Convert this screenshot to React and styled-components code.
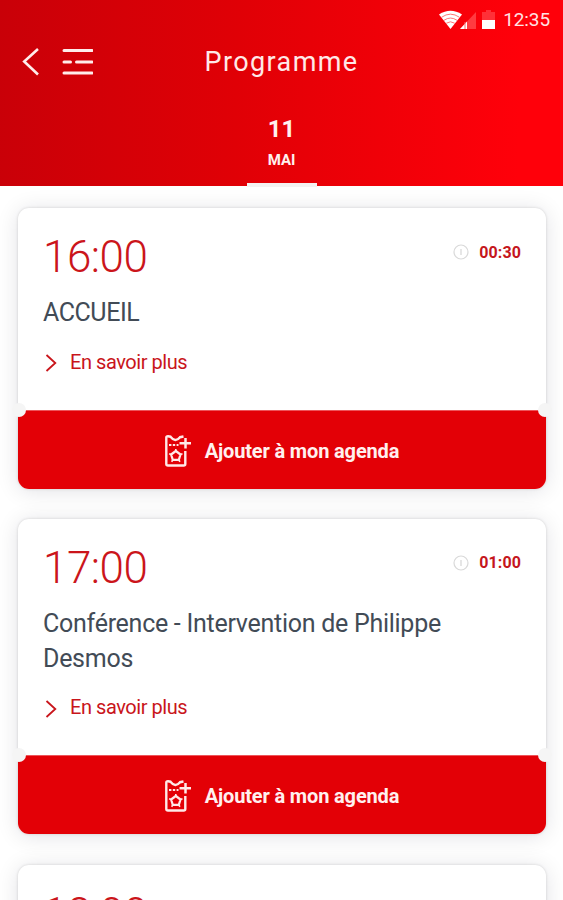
import React from 'react';
import styled, { createGlobalStyle } from 'styled-components';

const sessions = [
  { time: '16:00', duration: '00:30', title: 'ACCUEIL', spacing: '-0.45px' },
  { time: '17:00', duration: '01:00', title: 'Conférence - Intervention de Philippe Desmos' },
  { time: '18:00' },
];

const StatusIcons = () => (
  <svg width="58" height="22" viewBox="0 0 58 22" fill="none">
    <path d="M0 4.5Q11.5-3 23 4.5L11.5 19Z" fill="#fff" />
    <path d="M2.5 7.3Q11.5 1 20.5 7.3M5 10.3Q11.5 5.8 18 10.3M7.3 13.2Q11.5 10.4 15.7 13.2" stroke="#f66" strokeWidth="0.9" />
    <path d="M37 2V19H21Z" fill="#ff3b40" />
    <path d="M28 11.5V19H21Z" fill="#fff" />
    <path d="M26 12V19" stroke="#fa6568" />
    <path d="M47 0H52V2H56V10H43V2H47Z" fill="#ff3038" />
    <path d="M43 10H56V19H43Z" fill="#fff" />
  </svg>
);

const BackIcon = () => (
  <svg width="18" height="30" viewBox="0 0 18 30" fill="none">
    <path d="M17 2L3.2 14.5L17 27.5" stroke="#ffeceb" strokeWidth="2.6" />
  </svg>
);

const MenuIcon = () => (
  <svg width="32" height="30" viewBox="0 0 32 30" fill="none">
    <path d="M3 3.5H31M3 15H9.5M15.5 15H31M3 26H31" stroke="#ffeceb" strokeWidth="3" strokeLinecap="round" />
  </svg>
);

const TicketIcon = () => (
  <svg width="28" height="34" viewBox="0 0 28 34" fill="none" stroke="#ffe9e8">
    <path d="M20.3 17V30Q20.3 31.5 18.8 31.5H3Q1.3 31.5 1.3 30V3.5Q1.3 2.2 3 2.2L5.5 2.7Q10.3 9 15 3.2L18.5 2.5" strokeWidth="2.4" />
    <path d="M4 11H13.5" strokeWidth="1.9" strokeDasharray="2.4 1.4" />
    <path d="M20.5 4V14.5M14.5 9.3H26" strokeWidth="2.5" />
    <path d="M10.8 17L15.5 20.5L13.8 25.9H7.8L6.1 20.5Z" strokeWidth="2.2" strokeLinejoin="round" />
    <path d="M10.8 15V17M17.5 19.8L15.5 20.5M15 27.8L13.8 26M6.6 27.8L7.8 26M4.1 19.8L6 20.5" strokeWidth="1.6" />
  </svg>
);

const App = () => {
  return (
    <>
      <GlobalStyle />
      <Screen>
        <Header>
          <StatusBar>
            <StatusIcons />
            <Clock>12:35</Clock>
          </StatusBar>
          <NavBar>
            <NavIcons>
              <BackIcon />
              <MenuIcon />
            </NavIcons>
            <PageTitle>Programme</PageTitle>
          </NavBar>
          <DayTab>
            <DayNumber>11</DayNumber>
            <Month>MAI</Month>
          </DayTab>
        </Header>
        <List>
          {sessions.map(session => (
            <Card key={session.time}>
              <CardBody>
                <TimeRow>
                  <Time>{session.time}</Time>
                  {session.duration && (
                    <Duration>
                      <svg width="16" height="16" viewBox="0 0 16 16" fill="none" stroke="#d9d9d9">
                        <circle cx="8" cy="8" r="7" strokeWidth="1.2" />
                        <path d="M8 5V11" strokeWidth="1.3" />
                      </svg>
                      {session.duration}
                    </Duration>
                  )}
                </TimeRow>
                {session.title && (
                  <>
                    <SessionTitle $spacing={session.spacing}>{session.title}</SessionTitle>
                    <MoreLink>
                      <svg width="12" height="18" viewBox="0 0 12 18" fill="none">
                        <path d="M1.5 1L10.3 9L1.5 17" stroke="#c9151b" strokeWidth="1.8" />
                      </svg>
                      <span>En savoir plus</span>
                    </MoreLink>
                  </>
                )}
              </CardBody>
              {session.title && (
                <AgendaButton>
                  <Notch $side="left" />
                  <TicketIcon />
                  <span>Ajouter à mon agenda</span>
                  <Notch $side="right" />
                </AgendaButton>
              )}
            </Card>
          ))}
        </List>
      </Screen>
    </>
  );
}

const GlobalStyle = createGlobalStyle`
  * {
    box-sizing: border-box;
  }

  body {
    margin: 0;
    overflow: hidden;
    font-family: Roboto, "Liberation Sans", sans-serif;
  }
`;

const Screen = styled.div`
  width: 563px;
  height: 900px;
  overflow: hidden;
  background-color: #fff;
`;

const Header = styled.header`
  display: flex;
  flex-direction: column;
  height: 186px;
  background: linear-gradient(92deg, #c90008 0%, #e00006 42%, #ff000a 92%);
`;

const StatusBar = styled.div`
  display: flex;
  flex-shrink: 0;
  justify-content: flex-end;
  align-items: center;
  gap: 6px;
  height: 40px;
  padding-right: 13px;

  svg {
    margin-top: 1px;
  }
`;

const Clock = styled.span`
  font-size: 19px;
  line-height: 20px;
  letter-spacing: -0.1px;
  color: #ffe3e3;
`;

const NavBar = styled.div`
  display: grid;
  grid-template-columns: 1fr auto 1fr;
  flex-shrink: 0;
  align-items: center;
  height: 44px;
  padding: 0 21px;
`;

const NavIcons = styled.div`
  display: flex;
  gap: 22px;
`;

const PageTitle = styled.h1`
  margin: 0;
  font-size: 27px;
  line-height: 36px;
  font-weight: 400;
  letter-spacing: 1.4px;
  color: #ffe9e8;
`;

const DayTab = styled.div`
  display: flex;
  flex-direction: column;
  flex-shrink: 0;
  align-items: center;
  align-self: center;
  width: 70px;
  height: 103px;
  padding-top: 31px;
  border-bottom: 4px solid #f4f2f2;
  color: #fff0ef;
`;

const DayNumber = styled.span`
  font-size: 24px;
  line-height: 28px;
  font-weight: 700;
`;

const Month = styled.span`
  margin-top: 7px;
  font-size: 15px;
  line-height: 20px;
  font-weight: 700;
`;

const List = styled.main`
  display: flex;
  flex-direction: column;
  gap: 30.4px;
  padding: 22px 17px 0 18px;
`;

const Card = styled.article`
  border-radius: 11px;
  background-color: #fff;
  box-shadow: 0 0 3px rgba(0, 0, 0, 0.15), 0 2px 22px rgba(20, 20, 40, 0.12);
`;

const CardBody = styled.div`
  padding: 22px 25px 34px;
`;

const TimeRow = styled.div`
  display: flex;
  justify-content: space-between;
  height: 55px;
`;

const Time = styled.span`
  font-size: 44px;
  line-height: 54px;
  font-weight: 300;
  letter-spacing: -0.5px;
  color: #cb151b;
`;

const Duration = styled.span`
  display: flex;
  align-items: center;
  gap: 10px;
  height: 44px;
  font-size: 16px;
  font-weight: 700;
  letter-spacing: 0.1px;
  color: #c5161c;
`;

const SessionTitle = styled.h2`
  margin: 10px 0 0;
  font-size: 25px;
  line-height: 35px;
  font-weight: 400;
  letter-spacing: ${props => props.$spacing || '-0.27px'};
  color: #424b56;

  & + a {
    margin-top: 20.5px;
  }
`;

const MoreLink = styled.a`
  display: flex;
  align-items: center;
  gap: 13px;
  height: 25px;
  padding-left: 2px;
  font-size: 20px;
  letter-spacing: -0.45px;
  color: #c9151b;

  span {
    margin-top: -3px;
  }
`;

const AgendaButton = styled.div`
  position: relative;
  display: flex;
  justify-content: center;
  align-items: center;
  gap: 12px;
  height: 79px;
  padding-top: 2px;
  border-top: 1px solid #ed555a;
  border-radius: 0 0 11px 11px;
  background-color: #e30006;
  font-size: 20px;
  font-weight: 700;
  letter-spacing: -0.15px;
  color: #fff0ef;
`;

// half-circle bites at both ends of the perforation line
const Notch = styled.i`
  position: absolute;
  top: -8px;
  ${props => props.$side}: -6px;
  width: 14px;
  height: 14px;
  border-radius: 50%;
  background-color: #f5f5f5;
`;

export default App;
